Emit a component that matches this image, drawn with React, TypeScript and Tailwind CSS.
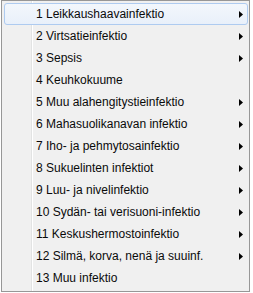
const items: { label: string; sub: boolean }[] = [
  { label: "1 Leikkaushaavainfektio", sub: true },
  { label: "2 Virtsatieinfektio", sub: true },
  { label: "3 Sepsis", sub: true },
  { label: "4 Keuhkokuume", sub: false },
  { label: "5 Muu alahengitystieinfektio", sub: true },
  { label: "6 Mahasuolikanavan infektio", sub: true },
  { label: "7 Iho- ja pehmytosainfektio", sub: true },
  { label: "8 Sukuelinten infektiot", sub: true },
  { label: "9 Luu- ja nivelinfektio", sub: true },
  { label: "10 Sydän- tai verisuoni-infektio", sub: true },
  { label: "11 Keskushermostoinfektio", sub: true },
  { label: "12 Silmä, korva, nenä ja suuinf.", sub: true },
  { label: "13 Muu infektio", sub: false },
];

const Arrow = () => (
  <svg width="4" height="7" viewBox="0 0 4 7" className="shrink-0">
    <polygon points="0,0 4,3.5 0,7" fill="#000" />
  </svg>
);

const App = () => {
  return (
    <div className="w-[253px] h-[293px] bg-white flex">
      <div className="w-[1px] h-full bg-white" />
      <div className="relative w-[249px] h-[292px] border border-[#979797] bg-[#f0f0f0] pt-[2px] pb-[2px] pl-[2px] pr-[1px] font-['Liberation_Sans',Arial,sans-serif] text-[12px] text-[#0a0a0a]">
        <div className="absolute left-[29px] top-0 bottom-0 w-[1px] bg-[#e2e3e3]" />
        <div className="absolute left-[30px] top-0 bottom-0 w-[1px] bg-white" />
        <div className="relative flex flex-col">
          {items.map((item, i) => (
            <div
              key={i}
              className={
                i === 0
                  ? "h-[22px] flex items-center justify-between pl-[31px] pr-[4px] rounded-[3px] border border-[#aecbf0] bg-gradient-to-b from-[#f3f7fc] to-[#e9f0fa]"
                  : "h-[22px] flex items-center justify-between pl-[32px] pr-[5px]"
              }
            >
              <span className="leading-none whitespace-nowrap">{item.label}</span>
              {item.sub && <Arrow />}
            </div>
          ))}
        </div>
      </div>
    </div>
  );
};

export default App;
